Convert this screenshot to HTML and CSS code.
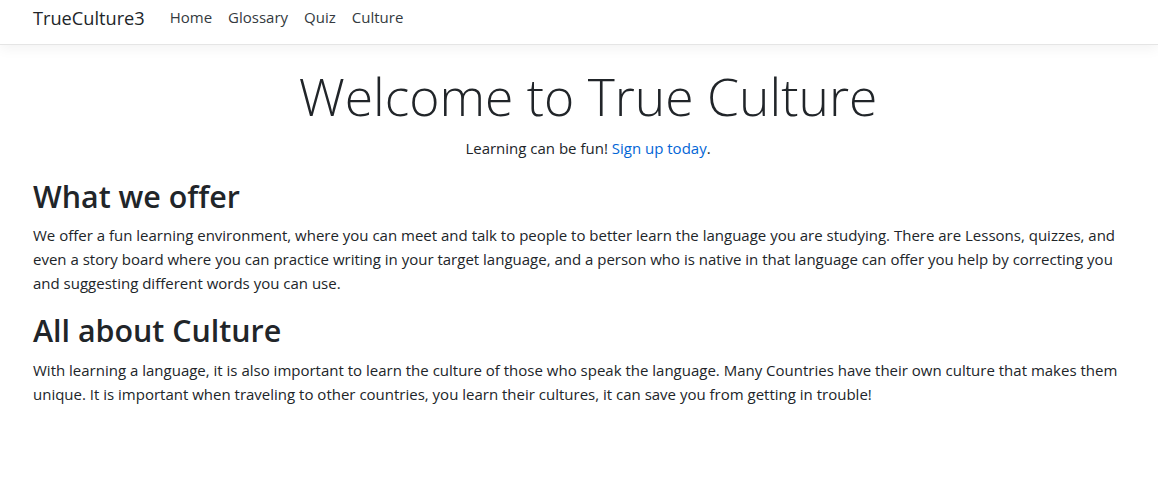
FILE: index.html
```html
<!DOCTYPE html>
<html lang="en">
<head>
<meta charset="utf-8">
<title>TrueCulture3</title>
<link rel="stylesheet" href="styles.css">
</head>
<body>
<header class="site-header">
  <nav class="navbar">
    <a class="brand" href="#">TrueCulture3</a>
    <ul class="nav-links">
      <li><a href="#">Home</a></li>
      <li><a href="#">Glossary</a></li>
      <li><a href="#">Quiz</a></li>
      <li><a href="#">Culture</a></li>
    </ul>
  </nav>
</header>
<main class="content">
  <section class="hero">
    <h1 class="display">Welcome to True Culture</h1>
    <p class="lead-line">Learning can be fun! <a href="#" class="link">Sign up today</a>.</p>
  </section>
  <section class="block">
    <h2 class="block-title">What we offer</h2>
    <p class="block-text">We offer a fun learning environment, where you can meet and talk to people to better learn the language you are studying. There are Lessons, quizzes, and even a story board where you can practice writing in your target language, and a person who is native in that language can offer you help by correcting you and suggesting different words you can use.</p>
  </section>
  <section class="block">
    <h2 class="block-title">All about Culture</h2>
    <p class="block-text">With learning a language, it is also important to learn the culture of those who speak the language. Many Countries have their own culture that makes them unique. It is important when traveling to other countries, you learn their cultures, it can save you from getting in trouble!</p>
  </section>
</main>
</body>
</html>
```

FILE: styles.css
```css
* { box-sizing: border-box; }
html, body { margin: 0; padding: 0; }
body {
  font-family: "Open Sans", "Noto Sans", sans-serif;
  font-size: 15px;
  line-height: 1.5;
  color: #212529;
  background: #fff;
}
a { text-decoration: none; }

.site-header {
  border-bottom: 1px solid #e5e5e5;
  box-shadow: 0 4px 12px rgba(0,0,0,0.05);
}
.navbar {
  display: flex;
  align-items: flex-start;
  height: 44px;
  padding: 0 33px;
}
.brand {
  font-size: 18.2px;
  color: #212529;
  margin: 9px 25px 0 0;
  line-height: 1;
}
.nav-links {
  display: flex;
  list-style: none;
  margin: 6px 0 0;
  padding: 0;
  gap: 16px;
  line-height: 22.5px;
}
.nav-links a {
  font-size: 15px;
  color: #343a40;
}

.content {
  padding: 0 15px 0 33px;
}
.hero {
  text-align: center;
  padding-top: 21px;
}
.display {
  font-size: 51.6px;
  font-weight: 300;
  line-height: 1.2;
  margin: 0 0 8px;
}
.lead-line {
  margin: 0;
  font-size: 15px;
  line-height: 24px;
}
.link { color: #0366d6; }

.block { margin-top: 19px; }
.block + .block { margin-top: 18px; }
.block-title {
  font-size: 30.4px;
  font-weight: 600;
  line-height: 1.2;
  margin: 0 0 8px;
}
.block-text {
  margin: 0;
  font-size: 15px;
  line-height: 24px;
}
```
